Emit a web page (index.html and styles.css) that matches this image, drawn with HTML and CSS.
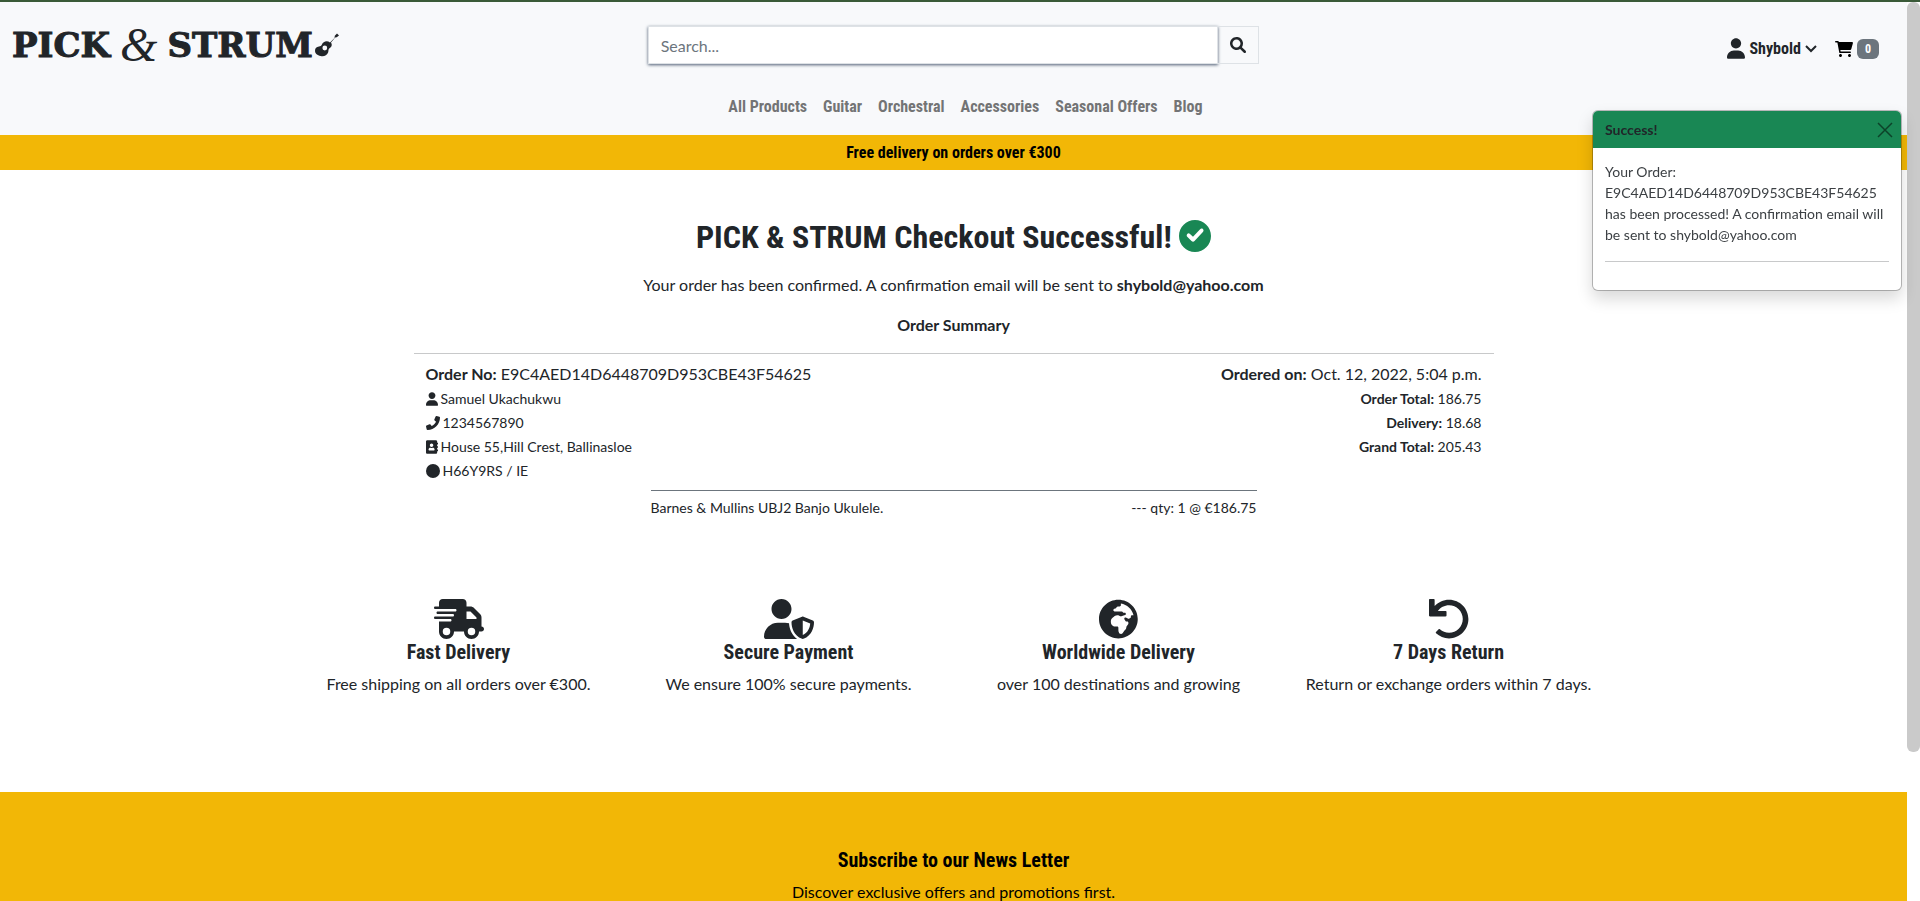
FILE: index.html
```html
<!DOCTYPE html>
<html lang="en">
<head>
<meta charset="utf-8">
<meta name="viewport" content="width=device-width, initial-scale=1">
<title>Pick &amp; Strum - Checkout Successful</title>
<link rel="stylesheet" href="styles.css">
</head>
<body>
<svg class="sprite" aria-hidden="true">
  <symbol id="user" viewBox="0 0 448 512"><path d="M224 256c70.700 0 128-57.300 128-128S294.700 0 224 0S96 57.300 96 128s57.300 128 128 128zM274.700 304H173.300C77.610 304 0 381.600 0 477.300C0 496.500 15.520 512 34.660 512h378.700C432.500 512 448 496.500 448 477.300C448 381.600 370.400 304 274.700 304z"/></symbol>
</svg>
<div class="shell">
  <div class="page">
    <header class="site-header">
      <div class="header-row">
        <a class="logo" href="#" aria-label="Pick and Strum home"><span>PICK</span><span class="amp">&amp;</span><span>STRUM</span><svg class="guitar" viewBox="0 0 24 24" aria-hidden="true"><path fill-rule="evenodd" d="M15 9.500L19.500 5l.3-2.300L22 .5 24 2.500l-2.300 1.800-1.500.3L16 9.500c1 1.500 1 3.200 0 4.500-.7 1-1.700 1.200-2.200 2-.5.900-.2 2-.7 3.500-1 3-4.400 4.500-7.500 3.600C2.500 22.500 0 20.600 0 17.800c0-2.700 1.500-3.900 4-4.300 1.500-.3 2.200-.5 2.800-1.800C8 8.500 12 7.200 15 9.500zM9.800 12.600a2.400 2.400 0 1 0 0 4.800 2.400 2.400 0 0 0 0-4.800z"/></svg></a>
        <form class="search" role="search">
          <input type="search" placeholder="Search..." aria-label="Search">
          <button type="submit" aria-label="Search"><svg viewBox="0 0 512 512"><path d="M500.300 443.700l-119.700-119.700c27.220-40.410 40.650-90.900 33.460-144.700C401.800 87.790 326.800 13.320 235.200 1.723C99.010-15.510-15.510 99.010 1.724 235.200c11.600 91.640 86.080 166.700 177.600 178.900c53.800 7.189 104.300-6.236 144.700-33.460l119.700 119.700c15.620 15.620 40.950 15.620 56.570 0C515.900 484.700 515.900 459.300 500.300 443.700zM79.100 208c0-70.580 57.420-128 128-128s128 57.420 128 128c0 70.580-57.420 128-128 128S79.100 278.600 79.100 208z"/></svg></button>
        </form>
        <div class="account">
          <a class="user-link" href="#"><svg class="user-icon" aria-hidden="true"><use href="#user"/></svg>Shybold<svg class="chevron" viewBox="0 0 12 8" aria-hidden="true"><path d="M1 1l5 5 5-5"/></svg></a>
          <a class="cart-link" href="#" aria-label="Cart, 0 items"><svg viewBox="0 0 576 512" aria-hidden="true"><path d="M96 0C107.500 0 117.400 8.190 119.600 19.510L121.100 32H541.800C562.100 32 578.300 52.250 572.600 72.660L518.600 264.700C514.700 278.500 502.100 288 487.800 288H170.700L179.900 336H488C501.300 336 512 346.700 512 360C512 373.300 501.300 384 488 384H159.100C148.500 384 138.600 375.800 136.400 364.500L76.140 48H24C10.750 48 0 37.250 0 24C0 10.750 10.750 0 24 0H96zM128 464C128 437.500 149.500 416 176 416C202.500 416 224 437.500 224 464C224 490.500 202.500 512 176 512C149.500 512 128 490.500 128 464zM512 464C512 490.500 490.500 512 464 512C437.500 512 416 490.500 416 464C416 437.500 437.500 416 464 416C490.500 416 512 437.500 512 464z"/></svg><span class="badge">0</span></a>
        </div>
      </div>
      <nav class="nav">
        <a href="#">All Products</a><a href="#">Guitar</a><a href="#">Orchestral</a><a href="#">Accessories</a><a href="#">Seasonal Offers</a><a href="#">Blog</a>
      </nav>
    </header>
    <div class="banner">Free delivery on orders over €300</div>
    <main>
      <section class="intro">
        <h1>PICK &amp; STRUM Checkout Successful! <svg viewBox="0 0 512 512" aria-hidden="true"><path d="M0 256C0 114.600 114.600 0 256 0C397.400 0 512 114.600 512 256C512 397.400 397.400 512 256 512C114.600 512 0 397.400 0 256zM382 190C396 176 396 158 382 144C368 134 350 134 338 146L224 268L176 222C162 210 144 210 132 222C120 234 120 254 132 268L200 336C214 350 236 350 248 336L382 190z"/></svg></h1>
        <p>Your order has been confirmed. A confirmation email will be sent to <strong>shybold@yahoo.com</strong></p>
        <p><strong>Order Summary</strong></p>
      </section>
      <section class="order">
        <div class="order-cols">
          <ul>
            <li class="lead"><span><strong>Order No:</strong> E9C4AED14D6448709D953CBE43F54625</span></li>
            <li><svg class="w12" aria-hidden="true"><use href="#user"/></svg>Samuel Ukachukwu</li>
            <li><svg class="w14" viewBox="0 0 512 512" aria-hidden="true"><path transform="matrix(-1 0 0 1 512 0)" d="M511.200 387l-23.250 100.800c-3.266 14.250-15.790 24.220-30.460 24.220C205.200 512 0 306.800 0 54.500c0-14.660 9.969-27.200 24.220-30.450l100.800-23.250C139.700-2.602 154.700 5.018 160.800 18.920l46.520 108.500c5.438 12.780 1.770 27.670-8.980 36.450L144.500 207.100c33.980 69.220 90.260 125.500 159.500 159.500l44.080-53.800c8.688-10.780 23.690-14.510 36.470-8.975l108.500 46.510C506.100 357.200 514.600 372.400 511.200 387z"/></svg>1234567890</li>
            <li><svg class="w12" viewBox="0 0 448 512" aria-hidden="true"><path d="M436 160c6.600 0 12-5.400 12-12v-40c0-6.600-5.400-12-12-12h-20V48c0-26.500-21.500-48-48-48H48C21.500 0 0 21.500 0 48v416c0 26.500 21.500 48 48 48h320c26.500 0 48-21.500 48-48v-48h20c6.600 0 12-5.400 12-12v-40c0-6.600-5.400-12-12-12h-20v-64h20c6.600 0 12-5.400 12-12v-40c0-6.600-5.400-12-12-12h-20v-64h20zm-228-32c35.300 0 64 28.700 64 64s-28.700 64-64 64-64-28.700-64-64 28.700-64 64-64zm112 236.800c0 10.600-10 19.200-22.400 19.200H118.400C106 384 96 375.400 96 364.800v-19.200c0-31.800 30.100-57.600 67.200-57.600h5c12.300 5.100 25.700 8 39.800 8s27.600-2.900 39.800-8h5c37.100 0 67.200 25.800 67.200 57.600v19.200z"/></svg>House 55,Hill Crest, Ballinasloe</li>
            <li><svg class="w14" viewBox="0 0 14 14" aria-hidden="true"><circle cx="7" cy="7" r="7"/></svg>H66Y9RS / IE</li>
          </ul>
          <ul class="totals">
            <li class="lead"><span><strong>Ordered on:</strong> Oct. 12, 2022, 5:04 p.m.</span></li>
            <li><span><strong>Order Total:</strong> 186.75</span></li>
            <li><span><strong>Delivery:</strong> 18.68</span></li>
            <li><span><strong>Grand Total:</strong> 205.43</span></li>
          </ul>
        </div>
        <div class="line-item"><span>Barnes &amp; Mullins UBJ2 Banjo Ukulele.</span><span>--- qty: 1 @ €186.75</span></div>
      </section>
      <section class="features">
        <div>
          <svg viewBox="0 0 640 512" aria-hidden="true"><path d="M112 0C85.500 0 64 21.500 64 48V96H16c-8.800 0-16 7.200-16 16s7.200 16 16 16H64 272c8.800 0 16 7.200 16 16s-7.200 16-16 16H64 48c-8.800 0-16 7.200-16 16s7.200 16 16 16H64 240c8.800 0 16 7.200 16 16s-7.200 16-16 16H64 16c-8.800 0-16 7.200-16 16s7.200 16 16 16H64 208c8.800 0 16 7.200 16 16s-7.200 16-16 16H64V416c0 53 43 96 96 96s96-43 96-96H384c0 53 43 96 96 96s96-43 96-96h32c17.700 0 32-14.300 32-32s-14.300-32-32-32V288 256 237.300c0-17-6.700-33.300-18.700-45.300L512 114.700c-12-12-28.300-18.700-45.300-18.700H416V48c0-26.500-21.500-48-48-48H112zM544 237.300V256H416V160h50.700L544 237.300zM160 368a48 48 0 1 1 0 96 48 48 0 1 1 0-96zm272 48a48 48 0 1 1 96 0 48 48 0 1 1 -96 0z"/></svg>
          <h2>Fast Delivery</h2><p>Free shipping on all orders over €300.</p>
        </div>
        <div>
          <svg viewBox="0 0 640 512" aria-hidden="true"><path d="M224 256c70.700 0 128-57.300 128-128S294.700 0 224 0S96 57.300 96 128s57.300 128 128 128zm-45.700 48C79.800 304 0 383.800 0 482.300C0 498.700 13.300 512 29.700 512H418.300c1.800 0 3.500-.2 5.300-.5c-76.300-55.100-99.800-141-103.100-200.200c-16.100-4.800-33.100-7.300-50.700-7.300H178.300zm308.800-78.300l-120 48C358 277.400 352 286.200 352 296c0 63.300 25.900 168.800 134.800 214.200c5.900 2.500 12.600 2.500 18.500 0C614.100 464.800 640 359.300 640 296c0-9.800-6-18.600-15.100-22.300l-120-48c-5.700-2.300-12.100-2.300-17.800 0zM591.400 312c-3.900 50.700-27.200 116.700-95.400 149.700V273.800L591.400 312z"/></svg>
          <h2>Secure Payment</h2><p>We ensure 100% secure payments.</p>
        </div>
        <div>
          <svg viewBox="0 0 496 512" aria-hidden="true"><path d="M248 8C111.030 8 0 119.030 0 256s111.030 248 248 248 248-111.030 248-248S384.970 8 248 8zm160 215.500v6.930c0 5.870-3.320 11.240-8.570 13.860l-15.390 7.700a15.485 15.485 0 0 1-15.530-.97l-18.210-12.140a15.520 15.520 0 0 0-13.500-1.810l-2.650.88c-9.700 3.230-13.660 14.790-7.990 23.300l13.240 19.860c2.870 4.310 7.710 6.900 12.890 6.900h8.210c8.560 0 15.500 6.940 15.500 15.500v11.340c0 3.350-1.090 6.620-3.100 9.300l-18.740 24.980c-1.420 1.900-2.390 4.100-2.830 6.430l-4.300 22.830c-.62 3.290-2.290 6.290-4.760 8.560a159.608 159.608 0 0 0-25 29.160l-13.030 19.550a27.756 27.756 0 0 1-23.090 12.360c-10.510 0-20.120-5.940-24.820-15.340a78.902 78.902 0 0 1-8.330-35.290V367.500c0-8.560-6.940-15.500-15.500-15.500h-25.880c-14.490 0-28.380-5.760-38.630-16a54.659 54.659 0 0 1-16-38.630v-14.060c0-17.190 8.100-33.380 21.850-43.700l27.580-20.690a54.663 54.663 0 0 1 32.780-10.930h.89c8.480 0 16.850 1.970 24.430 5.770l14.720 7.360c3.680 1.840 7.930 2.140 11.830.84l47.310-15.770c6.330-2.110 10.600-8.030 10.600-14.700 0-8.560-6.940-15.500-15.500-15.500h-10.090c-4.110 0-8.050-1.630-10.960-4.540l-6.920-6.920a15.493 15.493 0 0 0-10.960-4.540H199.500c-8.560 0-15.500-6.940-15.500-15.500v-4.400c0-7.110 4.840-13.310 11.740-15.040l14.450-3.610c3.740-.94 7-3.230 9.140-6.440l8.080-12.110c2.870-4.310 7.710-6.900 12.890-6.900h24.210c8.560 0 15.500-6.940 15.500-15.500v-21.700C359.230 71.630 422.860 131.020 441.930 208H423.500c-8.560 0-15.500 6.940-15.500 15.500z"/></svg>
          <h2>Worldwide Delivery</h2><p>over 100 destinations and growing</p>
        </div>
        <div>
          <svg viewBox="0 0 512 512" aria-hidden="true"><path d="M212.333 224.333H12c-6.627 0-12-5.373-12-12V12C0 5.373 5.373 0 12 0h48c6.627 0 12 5.373 12 12v78.112C117.773 39.279 184.260 7.470 258.175 8.007c136.906.994 246.448 111.623 246.157 248.532C504.041 393.258 393.120 504 256.333 504c-64.089 0-122.496-24.313-166.510-64.215-5.099-4.622-5.334-12.554-.467-17.420l33.967-33.967c4.474-4.474 11.662-4.717 16.401-.525C170.760 415.336 211.580 432 256.333 432c97.268 0 176-78.716 176-176 0-97.267-78.716-176-176-176-58.496 0-110.280 28.476-142.274 72.333h98.274c6.627 0 12 5.373 12 12v48c0 6.627-5.373 12-12 12z"/></svg>
          <h2>7 Days Return</h2><p>Return or exchange orders within 7 days.</p>
        </div>
      </section>
    </main>
    <footer class="newsletter">
      <h2>Subscribe to our News Letter</h2>
      <p>Discover exclusive offers and promotions first.</p>
    </footer>
  </div>
  <div class="scrollbar" aria-hidden="true"><div class="thumb"></div></div>
</div>
<aside class="toast" role="status">
  <div class="toast-head"><strong>Success!</strong><button type="button" aria-label="Close"><svg viewBox="0 0 16 16"><path d="M1 1l14 14M15 1L1 15"/></svg></button></div>
  <div class="toast-body"><p>Your Order: E9C4AED14D6448709D953CBE43F54625 has been processed! A confirmation email will be sent to shybold@yahoo.com</p><hr></div>
</aside>
</body>
</html>
```
FILE: styles.css
```css
* { box-sizing: border-box; }
body {
  margin: 0;
  font: 400 16px/24px Lato, sans-serif;
  color: #212529;
  background: #fff;
}
h1, h2, p, ul { margin: 0; padding: 0; }
ul { list-style: none; }
a { color: inherit; text-decoration: none; }
svg { fill: currentColor; }
strong { font-weight: 700; }
.sprite { display: none; }

.shell {
  display: grid;
  grid-template-columns: 1fr 13px;
  height: 100vh;
  overflow: hidden;
  border-top: 2px solid #3a5a38;
}
.page { overflow: hidden; }
.thumb {
  height: 750px;
  border-radius: 6px;
  background: #cacaca;
}
.scrollbar { background: #fff; }

.site-header {
  background: #f8f9fb;
  padding: 24px 0 16px;
}
.header-row {
  display: grid;
  grid-template-columns: repeat(3, 1fr);
  align-items: center;
}
.logo {
  display: flex;
  align-items: center;
  gap: 10px;
  height: 38px;
  padding-left: 12px;
  font: 700 34px/38px "DejaVu Serif", serif;
  -webkit-text-stroke: 1px currentColor;
}
.logo .amp {
  font: italic 400 48px/38px "Liberation Serif", serif;
  -webkit-text-stroke: 0;
}
.guitar { width: 24px; height: 24px; margin-left: -8px; -webkit-text-stroke: 0; }
.search { display: flex; padding: 0 12px; }
.search input {
  flex: 1;
  min-width: 0;
  height: 38px;
  padding: 0 12px;
  border: 1px solid #dee2e6;
  border-radius: 0;
  background: #fff;
  box-shadow: 0 1px 3px #4f5e74;
  font: 400 16px/24px Lato, sans-serif;
  color: #212529;
}
.search input::placeholder { color: #6c757d; opacity: 1; }
.search button {
  width: 41px;
  height: 38px;
  padding: 0;
  border: 1px solid #dee2e6;
  border-left: 0;
  background: transparent;
  color: #212529;
  display: grid;
  place-items: center;
}
.search button svg { width: 16px; height: 16px; }
.account {
  display: flex;
  justify-content: flex-end;
  align-items: center;
  gap: 18px;
  padding: 7px 28px 0 0;
  font: 700 16px/24px "Roboto Condensed", sans-serif;
}
.user-link, .cart-link { display: flex; align-items: center; gap: 4px; }
.user-icon { width: 18px; height: 21px; }
.chevron { width: 12px; height: 8px; fill: none; stroke: currentColor; stroke-width: 2; }
.cart-link { color: #000; }
.cart-link svg { width: 18px; height: 16px; }
.badge {
  padding: 4px 8px;
  border-radius: 6px;
  background: #6c757d;
  color: #fff;
  font-size: 12px;
  line-height: 12px;
}
.nav {
  display: flex;
  justify-content: center;
  gap: 16px;
  margin-top: 31px;
  padding-left: 24px;
  color: #737475;
  font: 700 16px/24px "Roboto Condensed", sans-serif;
}
.banner {
  padding: 6px 0 5px;
  background: #f2b706;
  color: #000;
  text-align: center;
  font: 700 16px/24px "Roboto Condensed", sans-serif;
}

.intro { padding-top: 48px; text-align: center; }
.intro h1 { font: 700 32px/38px "Roboto Condensed", sans-serif; margin-bottom: 17px; }
.intro h1 svg { width: 32px; height: 32px; vertical-align: -4px; color: #198754; }
.intro p + p { margin-top: 16px; }
.order {
  max-width: 1080px;
  margin: 16px auto 0;
  border-top: 1px solid #c8c9ca;
  padding: 8px 12px 0;
}
.order-cols { display: flex; justify-content: space-between; }
.order li { font-size: 14px; line-height: 24px; display: flex; align-items: center; gap: 3px; }
.order li.lead { font-size: 16px; padding-bottom: 1px; }
.order .totals li { justify-content: flex-end; }
.w12 { width: 12px; height: 14px; }
.w14 { width: 14px; height: 14px; }
.line-item {
  max-width: 606px;
  margin: 7px auto 0;
  padding-top: 5px;
  border-top: 1px solid #6c757d;
  display: flex;
  justify-content: space-between;
  font-size: 14px;
}
.features {
  max-width: 1320px;
  margin: 0 auto;
  padding: 79px 0 96px;
  display: grid;
  grid-template-columns: repeat(4, 1fr);
  text-align: center;
}
.features svg { display: block; height: 40px; margin: 0 auto 1px; }
.features h2, .newsletter h2 { font: 700 20px/24px "Roboto Condensed", sans-serif; }
.features p, .newsletter p { margin-top: 8px; }
.newsletter {
  min-height: 286px;
  padding: 56px 0;
  background: #f2b706;
  color: #000;
  text-align: center;
}

.toast {
  position: fixed;
  top: 110px;
  right: 18px;
  width: 310px;
  border: 1px solid rgba(0, 0, 0, .25);
  border-radius: 6px;
  background: #fff;
  background-clip: padding-box;
  box-shadow: 0 8px 16px rgba(0, 0, 0, .15);
  font-size: 14px;
  line-height: 21px;
  overflow: hidden;
}
.toast-head {
  display: flex;
  align-items: center;
  justify-content: space-between;
  padding: 8px 8px 8px 12px;
  background: #198754;
}
.toast-head button {
  width: 16px;
  height: 16px;
  padding: 0;
  border: 0;
  background: none;
  color: #000;
  opacity: .5;
}
.toast-head svg { display: block; stroke: currentColor; stroke-width: 1.5; }
.toast-body { padding: 13px 12px 12px; color: #3c4044; overflow-wrap: anywhere; }
.toast hr { margin: 16px 0; border: 0; border-top: 1px solid #c8c9ca; }
```
